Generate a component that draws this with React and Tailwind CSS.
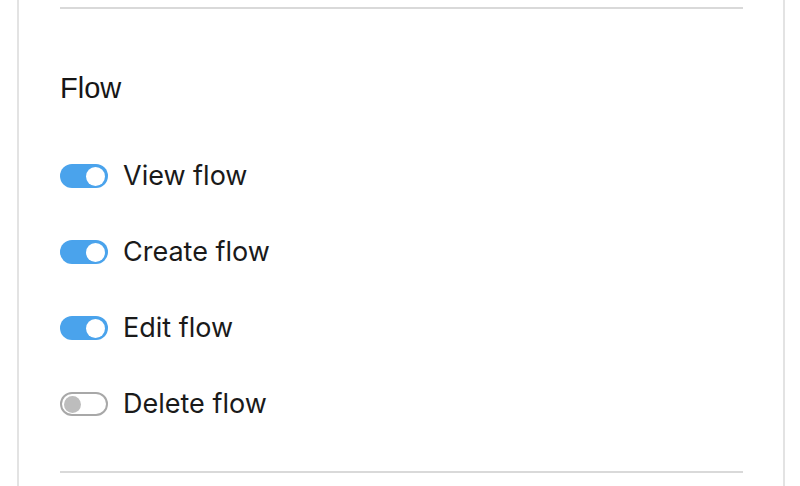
import { useState } from "react";

const perms = [
    { label: "View flow", on: true },
    { label: "Create flow", on: true },
    { label: "Edit flow", on: true },
    { label: "Delete flow", on: false },
];

function Toggle({ on, onClick }) {
    return (
        <button
            onClick={onClick}
            className={
                on
                    ? "flex items-center justify-end w-[48px] h-[24px] rounded-full bg-[#4aa3ec] px-[3px] shrink-0"
                    : "flex items-center justify-start w-[48px] h-[24px] rounded-full bg-white border-2 border-[#a8a8a8] px-[2px] shrink-0"
            }
        >
            <span className={on ? "block w-[19px] h-[19px] rounded-full bg-white" : "block w-[17px] h-[17px] rounded-full bg-[#bdbdbd]"}></span>
        </button>
    );
}

export default function App() {
    const [items, setItems] = useState(perms);

    //flip one permission
    function flip(i) {
        setItems(items.map((p, j) => (j === i ? { ...p, on: !p.on } : p)));
    }

    return (
        <div className="h-[486px] bg-white overflow-hidden pl-[17px] pr-[15px]">
            <div className="h-full border-l-2 border-r-2 border-[#e3e3e3] pl-[41px] pr-[40px] pt-[7px]">
                <div className="h-[2px] bg-[#d9d9d9]"></div>
                <h2 className="mt-[62px] text-[29px] leading-[34px] text-[#161616] font-['Liberation_Sans',Arial,sans-serif]">Flow</h2>
                <div className="mt-[55px] flex flex-col gap-[44px]">
                    {items.map((p, i) => (
                        <div key={p.label} className="flex items-center gap-[15px] h-[32px]">
                            <Toggle on={p.on} onClick={() => flip(i)} />
                            <span className="text-[27px] leading-[32px] text-[#1a1a1a] font-['Inter',sans-serif]">{p.label}</span>
                        </div>
                    ))}
                </div>
                <div className="mt-[51px] h-[2px] bg-[#d9d9d9]"></div>
            </div>
        </div>
    );
}
